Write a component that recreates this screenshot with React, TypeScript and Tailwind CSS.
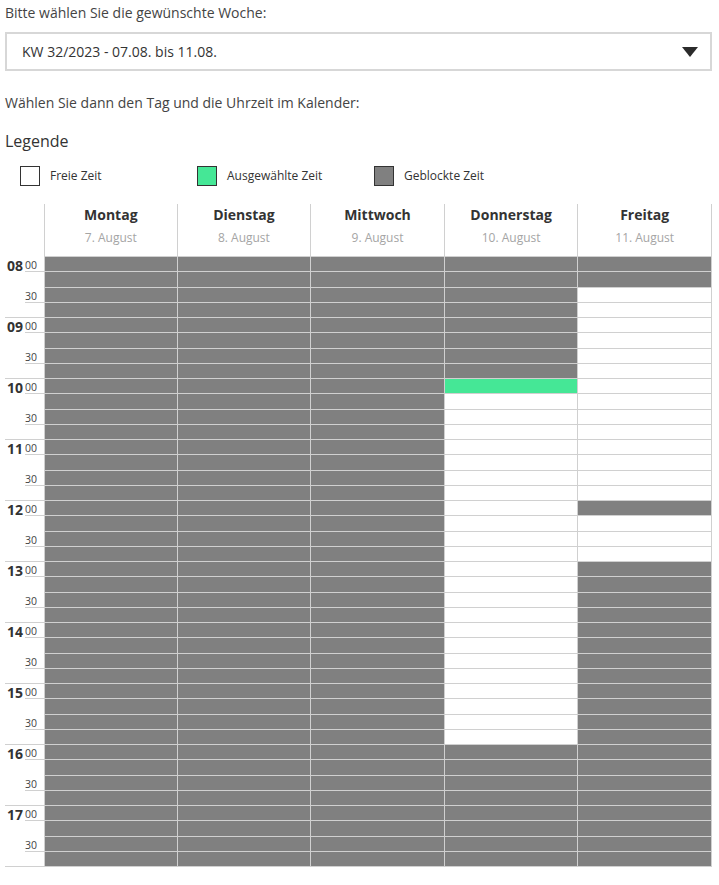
import React from "react";

type S = "b" | "f" | "s";

const days = [
  { name: "Montag", date: "7. August" },
  { name: "Dienstag", date: "8. August" },
  { name: "Mittwoch", date: "9. August" },
  { name: "Donnerstag", date: "10. August" },
  { name: "Freitag", date: "11. August" },
];

function pattern(dayIdx: number): S[] {
  const arr: S[] = [];
  for (let i = 0; i < 40; i++) {
    let s: S = "b";
    if (dayIdx === 3) {
      if (i === 8) s = "s";
      else if (i >= 9 && i <= 31) s = "f";
    } else if (dayIdx === 4) {
      if ((i >= 2 && i <= 15) || (i >= 17 && i <= 19)) s = "f";
    }
    arr.push(s);
  }
  return arr;
}

const hours = ["08", "09", "10", "11", "12", "13", "14", "15", "16", "17"];

export default function App() {
  return (
    <div
      className="w-[719px] bg-white pl-[5px] pr-[7px] pt-[3px] pb-[20px] text-[#444]"
      style={{ fontFamily: '"Open Sans", "Noto Sans", sans-serif' }}
    >
      <div className="text-[14px] leading-[20px]">Bitte wählen Sie die gewünschte Woche:</div>
      <div className="mt-[9px] flex h-[39px] items-center justify-between border-2 border-[#d7d7d7] pl-[15px] pr-[12px]">
        <span className="text-[14px] text-[#333]">KW 32/2023 - 07.08. bis 11.08.</span>
        <svg width="16" height="10" viewBox="0 0 16 10">
          <polygon points="0,0 16,0 8,10" fill="#2b2b2b" />
        </svg>
      </div>
      <div className="mt-[22px] text-[14px] leading-[20px]">Wählen Sie dann den Tag und die Uhrzeit im Kalender:</div>
      <div className="mt-[17px] text-[16px] leading-[22px] text-[#333]">Legende</div>
      <div className="mt-[14px] flex items-center pl-[15px] text-[12px] text-[#333]">
        <div className="flex w-[177px] items-center">
          <span className="h-[20px] w-[20px] border border-[#333] bg-white" />
          <span className="ml-[10px]">Freie Zeit</span>
        </div>
        <div className="flex w-[177px] items-center">
          <span className="h-[20px] w-[20px] border border-[#333] bg-[#45e796]" />
          <span className="ml-[10px]">Ausgewählte Zeit</span>
        </div>
        <div className="flex items-center">
          <span className="h-[20px] w-[20px] border border-[#333] bg-[#808080]" />
          <span className="ml-[10px]">Geblockte Zeit</span>
        </div>
      </div>

      <div className="mt-[18px]">
        <div className="grid grid-cols-[39px_repeat(5,minmax(0,1fr))]">
          <div />
          {days.map((d, i) => (
            <div
              key={d.name}
              className={`flex h-[53px] flex-col items-center border-b border-r border-[#d0d0d0] pt-[1px] ${i === 0 ? "border-l" : ""}`}
            >
              <span className="text-[14px] font-bold leading-[20px] text-[#333]">{d.name}</span>
              <span className="mt-[5px] text-[12px] leading-[16px] text-[#a5a5a5]">{d.date}</span>
            </div>
          ))}
        </div>
        <div className="grid grid-cols-[39px_repeat(5,minmax(0,1fr))]">
          <div className="flex flex-col">
            {hours.map((h) => (
              <React.Fragment key={h}>
                <div className="flex h-[15.25px]">
                  <span className="w-[20px] pr-[2px] pt-[1px] text-right text-[14px] font-bold leading-[15px] text-[#333]">
                    {h}
                  </span>
                  <span className="h-full flex-1 border-b border-[#d0d0d0] pt-[1.5px] text-[10.5px] leading-[12px] text-[#444]">
                    00
                  </span>
                </div>
                <div className="h-[15.25px]" />
                <div className="ml-[20px] h-[15.25px] border-b border-[#d0d0d0] pt-[2px] text-[10.5px] leading-[13px] text-[#444]">
                  30
                </div>
                <div className="h-[15.25px] border-b border-[#d0d0d0]" />
              </React.Fragment>
            ))}
          </div>
          {days.map((d, di) => (
            <div
              key={d.name}
              className={`flex flex-col border-r border-[#d0d0d0] ${di === 0 ? "border-l" : ""}`}
            >
              {pattern(di).map((s, i) => (
                <div
                  key={i}
                  className={`h-[15.25px] border-b border-[#d0d0d0] ${
                    s === "b" ? "bg-[#808080]" : s === "s" ? "bg-[#45e796]" : "bg-white"
                  }`}
                />
              ))}
            </div>
          ))}
        </div>
      </div>
    </div>
  );
}
